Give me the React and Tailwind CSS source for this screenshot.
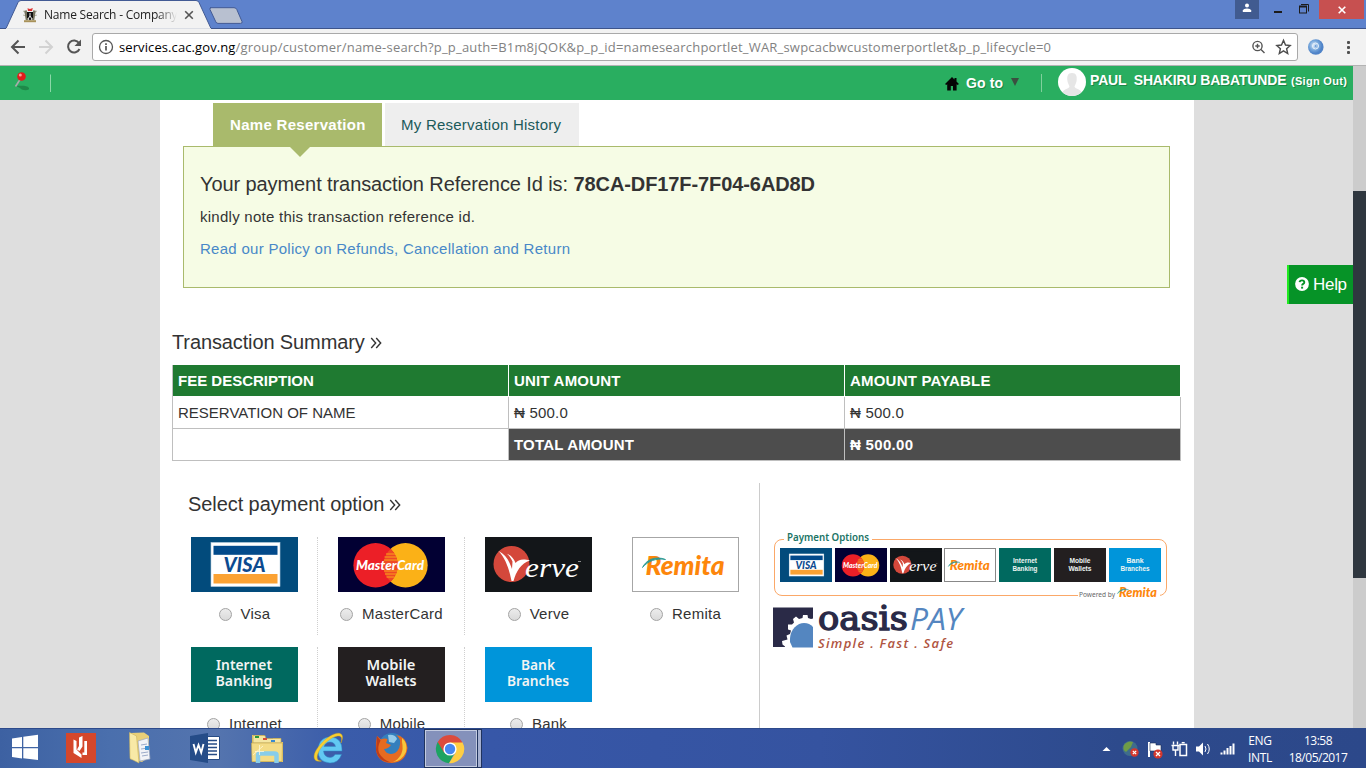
import React from "react";

const SANS = "font-['Liberation_Sans',Arial,sans-serif]";
const UI = "font-['Open_Sans','Noto_Sans',sans-serif]";

/* ---------- payment logos (107 x 55 artboard) ---------- */

function VisaLogo() {
  return (
    <g>
      <rect width="107" height="55" fill="#024b7c" />
      <rect x="20" y="5.5" width="69" height="44" fill="#fff" stroke="#b9cfe0" strokeWidth="0.6" />
      <rect x="22.5" y="8.8" width="64" height="9" fill="#024a8b" />
      <rect x="22.5" y="37" width="64" height="9.5" fill="#fba233" />
      <text x="32.5" y="35" fontFamily="Lato" fontWeight="900" fontStyle="italic" fontSize="20.5" fill="#0c4a8f" textLength="42" lengthAdjust="spacingAndGlyphs">VISA</text>
    </g>
  );
}

function MasterLogo() {
  return (
    <g>
      <rect width="107" height="55" fill="#020033" />
      <circle cx="67.500" cy="28.300" r="22.200" fill="#fbb117" />
      <circle cx="37.600" cy="28.300" r="22.200" fill="#ec1f27" />
      <path d="M52.500 12a22.200 22.200 0 0 1 0 32.600a22.200 22.200 0 0 1 0-32.600z" fill="#ee4a24" />
      <path d="M48 17h9M46.500 20h12M46 23h13M46 34h13M47 37h11M48.500 40h8" stroke="#fba11b" strokeWidth="1" />
      <text x="18" y="33.300" fontFamily="Lato" fontWeight="900" fontStyle="italic" fontSize="13.500" fill="#fff" textLength="68" lengthAdjust="spacingAndGlyphs">MasterCard</text>
    </g>
  );
}

function VerveLogo() {
  return (
    <g>
      <rect width="107" height="55" fill="#131619" />
      <circle cx="26.500" cy="27" r="18" fill="#d4483b" />
      <path d="M13.500 14C20 17 24 23 27 32L27.500 24.500C26 21 24 18.500 22 16.800C26.500 18.500 29 22 30.500 26C33.500 22.500 37.500 21.500 45 23.500C36 26 31 35 28.500 44H26.500C24.500 33 20.500 21 13.500 14z" fill="#fff" />
      <text x="40" y="40" fontFamily="Liberation Serif" fontStyle="italic" fontSize="27" fill="#fff" textLength="54" lengthAdjust="spacingAndGlyphs">erve</text>
      <path d="M93 24.500h3" stroke="#aaa" strokeWidth="0.800" />
    </g>
  );
}

function RemitaMark() {
  return (
    <g>
      <text x="13.500" y="38" fontFamily="Lato" fontWeight="900" fontStyle="italic" fontSize="27" fill="#fd860b" textLength="79" lengthAdjust="spacingAndGlyphs">Remita</text>
      <path d="M10.500 30.500C14 23 23 18.500 33.500 22.500C24 21 16 24 10.500 30.500z" fill="#2c9a94" stroke="#2c9a94" strokeWidth="0.900" />
    </g>
  );
}

function RemitaLogo() {
  return (
    <g>
      <rect x="0.500" y="0.500" width="106" height="54" fill="#fff" stroke="#a6a6a6" />
      <RemitaMark />
    </g>
  );
}

function WordLogo({ lines, fill, widths }) {
  return (
    <g>
      <rect width="107" height="55" fill={fill} />
      {lines.map((t, i) => (
        <text key={t} x="53" y={22.7 + i * 16.500} textAnchor="middle" fontFamily="Noto Sans, Open Sans" fontWeight="600" fontSize="14" fill="#f2f4f3" textLength={widths[i]} lengthAdjust="spacingAndGlyphs">{t}</text>
      ))}
    </g>
  );
}

const options = [
  { label: "Visa", logo: <VisaLogo />, dotted: true },
  { label: "MasterCard", logo: <MasterLogo />, dotted: true },
  { label: "Verve", logo: <VerveLogo /> },
  { label: "Remita", logo: <RemitaLogo /> },
  { label: "Internet", logo: <WordLogo lines={["Internet", "Banking"]} widths={[56, 57]} fill="#00695f" />, dotted: true },
  { label: "Mobile", logo: <WordLogo lines={["Mobile", "Wallets"]} widths={[49, 51]} fill="#231f20" />, dotted: true },
  { label: "Bank", logo: <WordLogo lines={["Bank", "Branches"]} widths={[34, 62]} fill="#0095da" /> },
];

function Option({ label, logo, dotted }) {
  return (
    <div className={"flex h-[98px] w-[147px] flex-col items-center border-r border-dotted " + (dotted ? "border-[#cfcfcf]" : "border-transparent")}>
      <svg width="107" height="55" viewBox="0 0 107 55" className="shrink-0">{logo}</svg>
      <div className="mt-[12px] flex h-5 items-center gap-[9px] pl-px">
        <span className="h-[13px] w-[13px] rounded-full border border-[#a3a3a3] bg-linear-to-b from-[#ececec] to-[#dadada]" />
        <span className="text-[15px] leading-5 tracking-[0.25px] text-[#333]">{label}</span>
      </div>
    </div>
  );
}

function Raquo() {
  return (
    <svg width="12" height="14" viewBox="0 0 12 14" className="mt-[2px] ml-[5px]">
      <path d="M1.200 2L5.700 7L1.200 12M6.200 2L10.700 7L6.200 12" fill="none" stroke="#333" strokeWidth="1.400" />
    </svg>
  );
}

/* ---------- browser chrome ---------- */

function TabStrip() {
  return (
    <div className="flex h-[29px] justify-between border-b border-[#3d548b] bg-[#5e82cc]">
      <div className="relative h-[29px] w-[250px]">
        <svg width="250" height="29" viewBox="0 0 250 29" className="absolute top-0 left-0">
          <path d="M0 28.500H6L18 2.500Q19 0.500 21 0.500H196Q198 0.500 199 2.500L211 28.500" fill="#f2f2f2" stroke="#425a94" />
          <path d="M6 29H211" stroke="#f2f2f2" strokeWidth="1.600" />
          <path d="M0 28.500H6" stroke="#3d548b" />
          <path d="M210.500 7.700H234Q236 7.700 236.800 9.500L242 21.500Q242.600 23.400 240.500 23.400H218Q216.500 23.400 215.800 21.800L210 9.500Q209.500 7.700 211 7.700z" fill="#b8c0d0" stroke="#425a94" />
        </svg>
        <div className="relative flex h-[29px] items-center pl-[22px]">
          <svg width="16" height="16" viewBox="0 0 16 16">
            <path d="M5.500 1.200L8 2L10.800 1L10 4H6z" fill="#d33" />
            <path d="M1 4l2 1M1 8l3 1M15 4l-2 1M15 8l-3 1" stroke="#b9b9a6" strokeWidth="1" />
            <path d="M3.500 3.500L5 13M12.500 3.500L11 13" stroke="#777460" strokeWidth="2.500" />
            <path d="M5 5h6v5.500L8 13.500L5 10.500z" fill="#111" />
            <path d="M8 6v3l-2 3M8 9l2 3" stroke="#eee" strokeWidth="1" fill="none" />
            <path d="M2 14.200h12" stroke="#a8925a" strokeWidth="2" />
          </svg>
          <span className={UI + " ml-[6px] w-[133px] overflow-hidden text-[12px] leading-5 tracking-[-0.22px] whitespace-nowrap text-[#222] [mask-image:linear-gradient(to_right,#000_85%,transparent)]"}>Name Search - Company</span>
          <svg width="10" height="10" viewBox="0 0 10 10" className="ml-[7px]"><path d="M1.200 1.200L8.800 8.800M8.800 1.200L1.200 8.800" stroke="#555" strokeWidth="1.600" /></svg>
        </div>
      </div>
      <div className="flex h-[19px] pr-[2px]">
        <div className="flex w-6 items-center justify-center bg-[#415b90]">
          <svg width="10" height="10" viewBox="0 0 10 10" className="mb-[4px]"><circle cx="5" cy="2.500" r="2" fill="#fff" /><path d="M0.800 9V7.500Q1.500 5.500 5 5.500T9.200 7.500V9z" fill="#fff" /></svg>
        </div>
        <svg width="60" height="19" viewBox="0 0 60 19">
          <rect x="15" y="11" width="8" height="2" fill="#1c1c1c" />
          <rect x="40.500" y="6.500" width="7" height="6.500" fill="none" stroke="#1c1c1c" />
          <path d="M40 6.500h8" stroke="#1c1c1c" strokeWidth="2" />
          <path d="M42 4.500h7.500v7" fill="none" stroke="#1c1c1c" />
        </svg>
        <div className="flex w-[45px] items-center justify-center bg-[#c75050]">
          <svg width="8" height="8" viewBox="0 0 8 8"><path d="M0.700 0.700L7.300 7.300M7.300 0.700L0.700 7.300" stroke="#fff" strokeWidth="1.600" /></svg>
        </div>
      </div>
    </div>
  );
}

function Toolbar() {
  return (
    <div className="flex h-[37px] items-center border-b border-[#b3b3b3] bg-[#f2f2f2]">
      <svg width="92" height="36" viewBox="0 0 92 36" className="shrink-0">
        <path d="M25 18H12.500M18.500 11.500L12 18L18.500 24.500" fill="none" stroke="#555" strokeWidth="2" />
        <path d="M39 18H51.500M45.500 11.500L52 18L45.500 24.500" fill="none" stroke="#d2d2d2" strokeWidth="2" />
        <path d="M79 14A6 6 0 1 0 79.500 20" fill="none" stroke="#555" strokeWidth="2" />
        <path d="M81 10.500V17H74.500z" fill="#555" />
      </svg>
      <div className="flex h-7 w-[1206px] shrink-0 items-center rounded-[3px] border border-[#a9a9a9] bg-white pl-[5px]">
        <svg width="16" height="16" viewBox="0 0 16 16" className="shrink-0"><circle cx="8" cy="8" r="6.500" fill="none" stroke="#555" strokeWidth="1.300" /><path d="M8 7v4.500M8 4.300v1.700" stroke="#555" strokeWidth="1.700" /></svg>
        <span className={UI + " ml-[5px] w-[1128px] text-[13px] leading-5 tracking-[0.205px] whitespace-nowrap text-[#828282]"}>
          <span className="tracking-[0.1px] text-black">services.cac.gov.ng</span>/group/customer/name-search?p_p_auth=B1m8jQOK&amp;p_p_id=namesearchportlet_WAR_swpcacbwcustomerportlet&amp;p_p_lifecycle=0
        </span>
        <svg width="48" height="18" viewBox="0 0 48 18" className="shrink-0">
          <circle cx="10.500" cy="8" r="4.600" fill="none" stroke="#555" strokeWidth="1.400" />
          <path d="M14 11.500L17.500 15M8.300 8h4.400M10.500 5.800v4.400" stroke="#555" strokeWidth="1.400" />
          <path d="M36.500 2.300L38.500 7L43.200 7.500L39.600 10.700L40.700 15.500L36.500 12.900L32.300 15.500L33.400 10.700L29.800 7.500L34.500 7z" fill="none" stroke="#4c4c4c" strokeWidth="1.400" />
        </svg>
      </div>
      <svg width="68" height="36" viewBox="0 0 68 36" className="shrink-0">
        <defs><radialGradient id="orb" cx="0.400" cy="0.400"><stop offset="0" stopColor="#e3effa" /><stop offset="0.600" stopColor="#77a8dc" /><stop offset="1" stopColor="#4f83c8" /></radialGradient></defs>
        <circle cx="17.800" cy="18" r="7.800" fill="url(#orb)" />
        <circle cx="17.500" cy="17" r="3" fill="none" stroke="#e8f2fc" />
        <circle cx="17.500" cy="17" r="1" fill="#6a9bd8" />
        <g fill="#505050"><rect x="49" y="12" width="3" height="3" rx="1" /><rect x="49" y="17" width="3" height="3" rx="1" /><rect x="49" y="22" width="3" height="3" rx="1" /></g>
      </svg>
    </div>
  );
}

function GreenBar() {
  return (
    <div className="flex h-[34px] shrink-0 items-center justify-between bg-[#29ae60]">
      <svg width="60" height="34" viewBox="0 0 60 34">
        <path d="M16 20C20 20 27 19 29 22C30 25 22 25 20 22z" fill="#1c7f43" opacity="0.800" />
        <path d="M15.500 20.500L20 13.500" stroke="#aaa" strokeWidth="1.600" />
        <circle cx="21.500" cy="10.500" r="4.300" fill="#e21b1b" /><circle cx="20.300" cy="8.900" r="1.500" fill="#ff9c94" />
        <path d="M50.500 8.500V26" stroke="#8bd8a8" />
      </svg>
      <div className="flex h-full text-white [text-shadow:1px_1px_0_#1b8745]">
        <svg width="16" height="34" viewBox="0 0 16 34"><path d="M8 11L1 18L2.200 19L3.200 18.200V24.500H6.800V20H9V24.500H12.600V18.200L13.600 19L15 18L12.500 15.500V12H10.500V13.500z" fill="#050505" /></svg>
        <span className="mt-[7px] ml-[6px] w-[38px] text-[14px] leading-5 font-bold tracking-[0.1px] whitespace-nowrap">Go to</span>
        <span className="mt-[12px] ml-[7px] h-0 w-0 border-x-[4.500px] border-t-[8px] border-x-transparent border-t-[#3b4f40]" />
        <span className="mt-2 ml-[22px] h-[18px] w-px bg-[#80d09c]" />
        <svg width="28" height="28" viewBox="0 0 28 28" className="mt-[2px] ml-4">
          <clipPath id="av"><circle cx="14" cy="14" r="14" /></clipPath>
          <g clipPath="url(#av)"><rect width="28" height="28" fill="#fff" /><path d="M14 5C9.500 5 9 8.500 9.300 12C9.500 15 11 17 11.500 18.500C11 21 6 21 4.500 24V28H23.500V24C22 21 17 21 16.500 18.500C17 17 18.500 15 18.700 12C19 8.500 18.500 5 14 5z" fill="#e6e6e6" /></g>
        </svg>
        <span className="mt-[4px] ml-1 w-[197px] text-[14px] leading-5 font-bold tracking-[-0.15px] whitespace-pre">PAUL  SHAKIRU BABATUNDE</span>
        <span className="mt-[5px] mr-[6px] ml-1 w-[56px] text-[11px] leading-5 font-bold tracking-[0.3px] whitespace-nowrap">(Sign Out)</span>
      </div>
    </div>
  );
}

/* ---------- right hand column ---------- */

const minis = [
  { id: "visa", logo: <VisaLogo />, bg: "bg-[#024b7c]" },
  { id: "mc", logo: <MasterLogo />, bg: "bg-[#020033]" },
  { id: "verve", logo: <VerveLogo />, bg: "bg-[#131619]" },
  { id: "remita", logo: <RemitaMark />, bg: "bg-white border border-[#888]" },
  { id: "ib", lines: ["Internet", "Banking"], w: [24, 25], bg: "bg-[#00695f]" },
  { id: "mw", lines: ["Mobile", "Wallets"], w: [21, 23], bg: "bg-[#231f20]" },
  { id: "bb", lines: ["Bank", "Branches"], w: [17, 29], bg: "bg-[#0095da]" },
];

function PaymentStrip() {
  return (
    <div className="relative mt-[56px] ml-[14px] h-[57px] w-[393px] rounded-[8px] border border-[#fba868] pt-[8px] pl-[5px]">
      <svg width="88" height="16" viewBox="0 0 88 16" className="absolute top-[-10px] left-[9px] bg-white">
        <text x="3" y="11" fontFamily="Noto Sans, Open Sans" fontWeight="600" fontSize="10.500" fill="#1b7466" textLength="82" lengthAdjust="spacingAndGlyphs">Payment Options</text>
      </svg>
      <div className="flex gap-[2.800px]">
        {minis.map((m) => (
          <div key={m.id} className={"flex h-[34px] w-[52px] shrink-0 items-center justify-center overflow-hidden " + m.bg}>
            {m.logo ? (
              <svg width="54" height="28" viewBox="0 0 107 55" className="shrink-0">{m.logo}</svg>
            ) : (
              <svg width="52" height="34" viewBox="0 0 52 34">
                {m.lines.map((t, i) => (
                  <text key={t} x="26" y={15 + i * 8} textAnchor="middle" fontFamily="Liberation Sans" fontWeight="700" fontSize="7" fill="#eef5f3" textLength={m.w[i]} lengthAdjust="spacingAndGlyphs">{t}</text>
                ))}
              </svg>
            )}
          </div>
        ))}
      </div>
      <svg width="82" height="16" viewBox="0 0 82 16" className="absolute right-[6px] bottom-[-7px] bg-white">
        <text x="1" y="11" fontFamily="Noto Sans" fontSize="6.500" fill="#666" textLength="36" lengthAdjust="spacingAndGlyphs">Powered by</text>
        <g transform="translate(34.500 -7) scale(0.480)"><RemitaMark /></g>
      </svg>
    </div>
  );
}

function OasisPay() {
  return (
    <svg width="196" height="52" viewBox="0 0 196 52" className="mt-[5px] ml-[12px]">
      <path d="M1 6.500H41V17.500L39 18L36 17L35.500 14L31 14L30.500 17L27 18L24 15.500L21 18L22 21.500L20 23.500H16V28.500L19 29.500L18 33L14.500 34.500L15.500 38.500L10 40L10.500 43.500L13 45.500V46H1z" fill="#2a2a47" />
      <path d="M20.500 46.500L18 41V37.500C18.500 28 25.500 22 32 22C36 22 38.500 23.500 41 26V46.500z" fill="#5486c0" />
      <text x="46" y="29" fontFamily="DejaVu Serif" fontSize="34" fill="#2a2a47" stroke="#2a2a47" strokeWidth="1.400" textLength="90" lengthAdjust="spacingAndGlyphs">oasis</text>
      <text x="138" y="29" fontFamily="Open Sans" fontStyle="italic" fontSize="31" fill="#5486c0" textLength="52" lengthAdjust="spacingAndGlyphs">PAY</text>
      <text x="46" y="47" fontFamily="Open Sans" fontStyle="italic" fontWeight="600" fontSize="13" fill="#b0553f" textLength="135" lengthAdjust="spacing">Simple . Fast . Safe</text>
    </svg>
  );
}

/* ---------- taskbar ---------- */

const TaskIcon = ({ w, children }) => (
  <svg width={w} height="40" viewBox={"0 0 " + w + " 40"} className="shrink-0">{children}</svg>
);

function Taskbar() {
  return (
    <div className={UI + " flex h-10 shrink-0 items-center border-t border-[#2d4a8b] bg-[linear-gradient(90deg,#3d61a2_0%,#4a6fad_8%,#5474ae_16%,#3a5caa_25%,#3757a8_36%,#3553a0_60%,#2d4a8c_82%,#2c488a_100%)]"}>
      <TaskIcon w={52}>
        <path d="M12 9.500L22 8V18H12zM23.300 7.800L38 5.800V18H23.300zM12 19.300H22V29.500L12 28zM23.300 19.300H38V31L23.300 29.300z" fill="#fff" />
      </TaskIcon>
      <TaskIcon w={60}>
        <rect x="14" y="4" width="30" height="30" fill="#d4472b" />
        <path d="M21.500 10.500L24.500 12V20.500L29.500 25.500V29L21.500 24z" fill="#fff" />
        <path d="M27 8.500L30.500 7V17.500L27.500 22L25 20.500L27 17z" fill="#fff" />
        <path d="M32.300 12H35V26H30.500V23.500H32.300z" fill="#fff" />
      </TaskIcon>
      <TaskIcon w={68}>
        <path d="M18 4L32 3.500L37 7V28L30 33L18 30z" fill="#e9cf77" />
        <path d="M26 12L36 9L38 30L28 32z" fill="#f2f3f7" stroke="#9ca7bd" strokeWidth="0.700" />
        <path d="M29 16l6-1M29 20l7-1M29 24l7-1M30 27l6-1" stroke="#9cabc9" />
        <rect x="33" y="17" width="4" height="4" fill="#3b91d5" />
        <path d="M17.500 3.500L24.500 7L27 34L18 29.500z" fill="#f8e9a6" stroke="#cbb35d" strokeWidth="0.600" />
      </TaskIcon>
      <TaskIcon w={60}>
        <path d="M25 7.500H39.500V30.500H25z" fill="#fff" stroke="#264c86" />
        <path d="M28 11.500h9M28 15h9M28 18.500h9M28 22h9M28 25.500h9" stroke="#264c86" strokeWidth="1.500" />
        <path d="M10 7L28 4V34L10 31z" fill="#254c88" />
        <path d="M13.500 15L15.800 23.500L18.500 16L21.200 23.500L23.500 15" stroke="#fff" strokeWidth="1.900" fill="none" />
      </TaskIcon>
      <TaskIcon w={66}>
        <path d="M12 6H24V10H33V9H41V13H43V33H12z" fill="#e6cb69" />
        <path d="M13 6.500H25L26 9.500H41V14H13z" fill="#f5e6a2" stroke="#bba556" strokeWidth="0.700" />
        <path d="M15 8h4" stroke="#2a9a3a" strokeWidth="2" /><path d="M23 10h4" stroke="#d34c3a" strokeWidth="2" /><path d="M31 12h4" stroke="#388ad0" strokeWidth="2" />
        <path d="M11.500 14H42.500L42 32.500H12z" fill="#f4dc86" stroke="#c3a64e" strokeWidth="0.600" />
        <path d="M18 34V26Q18 24.500 20 24.500H34.500Q36.500 24.500 36.500 26V34" stroke="#88cdea" strokeWidth="4.500" fill="none" />
        <path d="M13 26l10-9M19.500 16v10M15 22.500h9" stroke="#fff8d8" strokeWidth="0.800" />
      </TaskIcon>
      <TaskIcon w={62}>
        <path d="M34 22H17.500Q18 28 24 28.500Q27.500 28.500 29 25.500H35.500Q32.500 34 24 34Q11.500 33 12 20.500Q13 8.500 24 8Q36.500 8.500 36 22zM29.500 17.500Q28.500 13 24 13T18 17.500z" fill="#62c9f2" fillRule="evenodd" stroke="#2f8fc9" strokeWidth="0.500" />
        <path d="M15.500 32C6 34 6 25 13.500 16.500C21 7 33 1 36 6C37 8 36.500 10.500 35 14C36.500 9 35.500 6.500 31.500 7C25 8 16.500 15.500 13 22C10 28 10.500 32 15.500 32z" fill="#f8cf30" stroke="#d9a514" strokeWidth="0.400" />
      </TaskIcon>
      <TaskIcon w={56}>
        <circle cx="24" cy="17.500" r="13.500" fill="#337fbd" />
        <path d="M20 6q7-1 9 4l-3 4l-5-1z" fill="#94cbea" />
        <path d="M9 7L13 10.500Q16 9 19.500 10L18 14L23 16Q20 20 16 20Q19 27 27 24Q33 20 32 11Q30 7 28 6Q38 7 39.500 19Q38 33 24 34Q10 34 8 21Q7.500 13 9 7z" fill="#e66b20" />
        <path d="M34 9Q40 14 38 23Q34 32 25 33Q37 27 34 13z" fill="#f7c63b" />
        <path d="M9 7L12.500 11.500Q9 18 11 24Q15 31 23 33.500Q10 33 8 21z" fill="#bf3d18" />
      </TaskIcon>
      <div className="flex h-[39px] w-[54px] items-center border border-[#20335e] bg-[#8491bb] pl-[8px] shadow-[inset_0_0_0_1px_#c3cbe0]">
        <svg width="34" height="34" viewBox="0 0 34 34">
          <path d="M17 17L4.700 10A14.200 14.200 0 0 0 16 31.200L22 20z" fill="#1da362" />
          <path d="M17 10H29.300A14.200 14.200 0 0 1 16 31.200L23 20z" fill="#ffce43" />
          <path d="M4.700 10L11 20.500L17 17V10.400H29.500A14.200 14.200 0 0 0 4.700 10z" fill="#dc4b3d" />
          <circle cx="17" cy="17" r="6.600" fill="#fff" /><circle cx="17" cy="17" r="5.200" fill="#4688f1" />
        </svg>
      </div>
      <div className="h-[39px] w-[4px] border-r border-y border-[#20335e] bg-[#a5b0d0]" />
      <svg width="142" height="40" viewBox="0 0 142 40" className="ml-auto">
        <path d="M6.500 22L10.500 18L14.500 22z" fill="#fff" />
        <circle cx="34" cy="19.500" r="7.500" fill="#3f6c8c" /><path d="M28 16Q32 11 37 13L35 18L30 23Q26 21 28 16z" fill="#6f9c46" />
        <circle cx="38.500" cy="23.500" r="4.200" fill="#d4372d" /><path d="M36.800 21.800l3.400 3.400M40.200 21.800l-3.400 3.400" stroke="#fff" strokeWidth="1.200" />
        <path d="M53 13V28" stroke="#fff" strokeWidth="2" /><path d="M54 14h6v2h5v8h-5v-2h-6z" fill="#fff" stroke="#1c2c55" strokeWidth="0.600" />
        <circle cx="62" cy="25" r="4.600" fill="#d4372d" /><path d="M60 23l4 4M64 23l-4 4" stroke="#fff" strokeWidth="1.300" />
        <path d="M77.500 12.500v3M81.500 12.500v3M75.500 16.500h8M77 17v4h5v-4M79.500 21v6" fill="none" stroke="#fff" strokeWidth="1.400" /><rect x="84" y="15.500" width="6.500" height="11" fill="none" stroke="#fff" strokeWidth="1.500" /><path d="M85.700 13.700h3" stroke="#fff" strokeWidth="1.500" />
        <path d="M100 17.500h3l4-4v13l-4-4h-3z" fill="#fff" /><path d="M109 17q2 3 0 6M111.500 15q3.500 5 0 10" fill="none" stroke="#fff" strokeWidth="1" />
        <path d="M125.500 25.500v-2M128.500 25.500v-4M131.500 25.500v-6.500M134.500 25.500v-8.500M137.500 25.500v-11" stroke="#fff" strokeWidth="2" />
      </svg>
      <div className="ml-[4px] w-[36px] text-center text-[12px] leading-[17px] tracking-[-0.3px] text-white">ENG<br />INTL</div>
      <div className="mr-[16px] ml-[8px] w-[64px] text-center text-[12px] leading-[17px] tracking-[-0.5px] whitespace-nowrap text-white">13:58<br />18/05/2017</div>
    </div>
  );
}

/* ---------- page ---------- */

export default function App() {
  const cell = "flex h-8 w-[336px] items-center border-r border-b border-[#bfbfbf] pt-[2px] pl-[5px]";
  return (
    <div className={SANS + " flex h-[768px] w-[1366px] flex-col overflow-hidden bg-[#dedede] text-[#333]"}>
      <TabStrip />
      <Toolbar />
      <div className="flex min-h-0 flex-1">
        <div className="flex w-[1353px] flex-col">
          <GreenBar />
          <div className="flex min-h-0 flex-1">
            <main className="ml-[160px] flex w-[1034px] flex-col overflow-hidden bg-white">
              <div className="mt-[3px] ml-[53px] flex h-[43px] shrink-0 gap-[3px] text-[15px]">
                <div className="relative flex w-[169px] items-center bg-[#a9ba6c] pt-px pl-[17px] font-bold tracking-[0.3px] text-white">
                  Name Reservation
                  <span className="absolute top-[43px] left-[76px] z-10 h-0 w-0 border-x-[11px] border-t-[11px] border-x-transparent border-t-[#a9ba6c]" />
                </div>
                <div className="flex w-[194px] items-center bg-[#eee] pt-px pl-4 tracking-[0.24px] text-[#1b5a5a]">My Reservation History</div>
              </div>
              <div className="ml-[23px] h-[142px] w-[987px] shrink-0 border border-[#a9ba6c] bg-[#f6fce5] pl-4">
                <p className="mt-[25px] text-[20px] leading-6 tracking-[-0.09px]">Your payment transaction Reference Id is: <b>78CA-DF17F-7F04-6AD8D</b></p>
                <p className="mt-[11px] text-[15px] leading-5 tracking-[0.26px]">kindly note this transaction reference id.</p>
                <p className="mt-[12px] text-[15px] leading-5 tracking-[0.28px] text-[#4888c8]">Read our Policy on Refunds, Cancellation and Return</p>
              </div>
              <h2 className="mt-[42px] ml-[12px] flex h-6 shrink-0 items-center text-[20px] leading-6 tracking-[-0.12px]">Transaction Summary<Raquo /></h2>
              <div className="mt-[11px] ml-[12px] w-[1009px] shrink-0 border-l border-[#bfbfbf] text-[15px]">
                <div className="flex font-bold text-white">
                  {["FEE DESCRIPTION", "UNIT AMOUNT", "AMOUNT PAYABLE"].map((h, i) => (
                    <div key={h} className={"flex h-8 w-[336px] items-center border-r border-b border-white bg-[#1f7a31] pt-[2px] pl-[5px] " + (i > 0 ? "tracking-[0.2px]" : "")}>{h}</div>
                  ))}
                </div>
                <div className="flex">
                  <div className={cell}>RESERVATION OF NAME</div>
                  <div className={cell + " tracking-[0.2px]"}>₦ 500.0</div>
                  <div className={cell + " tracking-[0.2px]"}>₦ 500.0</div>
                </div>
                <div className="flex">
                  <div className={cell} />
                  <div className={cell + " bg-[#4d4d4d] font-bold tracking-[0.2px] text-white"}>TOTAL AMOUNT</div>
                  <div className={cell + " bg-[#4d4d4d] font-bold tracking-[0.3px] text-white"}>₦ 500.00</div>
                </div>
              </div>
              <div className="mt-[22px] ml-[11px] flex h-[300px] shrink-0">
                <section className="w-[589px] border-r border-[#ccc]">
                  <h2 className="mt-[9px] ml-[17px] flex h-6 items-center text-[20px] leading-6 tracking-[-0.08px]">Select payment option<Raquo /></h2>
                  <div className="mt-[21px] flex flex-wrap gap-y-[12px]">
                    {options.map((o) => <Option key={o.label} {...o} />)}
                  </div>
                </section>
                <section>
                  <PaymentStrip />
                  <OasisPay />
                </section>
              </div>
            </main>
            <div className="flex flex-1 justify-end">
              <div className="mt-[165px] flex h-[39px] w-[66px] items-center gap-1 border-l-2 border-[#1fea1f] bg-[#069327] pl-[6px] text-[17px] tracking-[-0.3px] text-white">
                <svg width="14" height="14" viewBox="0 0 14 14" className="mb-[2px] shrink-0"><circle cx="7" cy="7" r="6.900" fill="#fff" /><path d="M4.600 5.200Q4.800 3.400 7 3.400T9.300 5.300Q9.300 6.300 8.200 6.900Q7.100 7.500 7.100 8.600" fill="none" stroke="#069327" strokeWidth="1.900" /><rect x="6.100" y="9.700" width="2" height="1.900" fill="#069327" /></svg>
                Help
              </div>
            </div>
          </div>
        </div>
        <div className="w-[13px] bg-[#ccc] pt-[125px]"><div className="h-[387px] bg-[#2f373f]" /></div>
      </div>
      <Taskbar />
    </div>
  );
}
